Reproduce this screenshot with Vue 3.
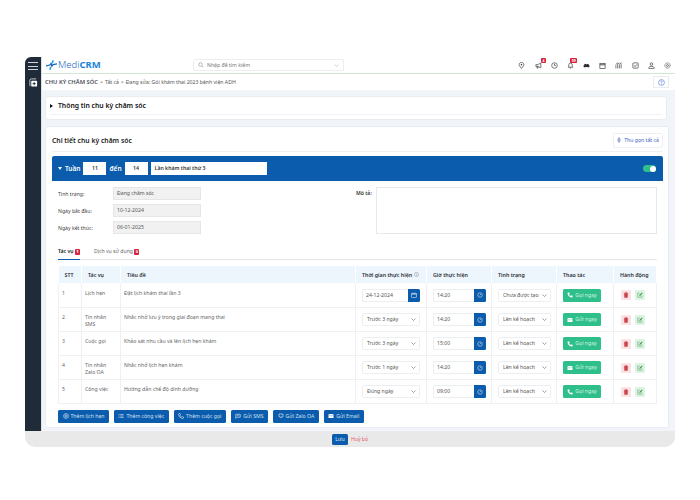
<template>
  <div class="page">
    <div class="frame">
      <div class="body">
        <aside class="sidebar">
          <div class="burger"><span></span><span></span><span></span></div>
          <div class="side-add">
            <svg viewBox="0 0 10 10" width="9" height="9"><path d="M1 9V2.500Q1 1 2.500 1H8" fill="none" stroke="#fff" stroke-width=".8"/><rect x="2.500" y="3" width="6.500" height="6.500" rx="1" fill="#fff"/><path d="M5.750 4.500v3.500M4 6.250h3.500" stroke="#1f2b38" stroke-width="1"/></svg>
          </div>
        </aside>
        <div class="main">
          <header class="topbar">
            <div class="logo">
              <svg viewBox="0 0 14 12" width="11" height="10"><path d="M0 7 5 6 6.500 4 7.500 7.500 9 5.500 14 4.500" fill="none" stroke="#1565c0" stroke-width="1.600"/><path d="M9 0 8 4M6 8 5 12" stroke="#29a3e0" stroke-width="2"/></svg>
              <span class="logo-thin">Medi</span><span class="logo-bold">CRM</span>
            </div>
            <div class="search">
              <svg viewBox="0 0 10 10" width="6" height="6"><circle cx="4.200" cy="4.200" r="3" fill="none" stroke="#8a8f96"/><path d="M6.500 6.500 9 9" stroke="#8a8f96"/></svg>
              <span>Nhập để tìm kiếm</span>
              <svg class="search-caret" viewBox="0 0 10 6" width="5" height="3"><path d="M1 1l4 4 4-4" fill="none" stroke="#9aa0a6"/></svg>
            </div>
            <div class="top-icons">
              <span v-for="ic in topIcons" :key="ic.name" class="top-icon">
                <svg viewBox="0 0 12 12" width="7" height="7" v-html="ic.svg"></svg>
                <b v-if="ic.badge" class="top-badge" :class="{ long: ic.badge.length > 1 }">{{ ic.badge }}</b>
              </span>
            </div>
          </header>

          <div class="crumbs">
            <b>CHU KỲ CHĂM SÓC</b><i>&gt;</i><span>Tất cả</span><i>&gt;</i><span>Đang sửa: Gói khám thai 2023 bệnh viện ADH</span>
            <div class="help">
              <svg viewBox="0 0 12 12" width="7" height="7"><circle cx="6" cy="6" r="5" fill="none" stroke="#4a6fd8"/><path d="M4.500 4.800Q4.800 3.400 6 3.400 7.500 3.500 7.400 4.800 7 6 6 6.500V7.500M6 8.500v.8" fill="none" stroke="#4a6fd8"/></svg>
            </div>
          </div>

          <div class="content">
            <section class="card info-card">
              <div class="info-inner">
                <svg viewBox="0 0 6 8" width="3" height="4"><path d="M0 0l6 4-6 4z" fill="#111"/></svg>
                <h2>Thông tin chu kỳ chăm sóc</h2>
              </div>
            </section>

            <section class="card detail-card">
              <div class="detail-head">
                <h3>Chi tiết chu kỳ chăm sóc</h3>
                <button class="collapse-btn">
                  <svg viewBox="0 0 8 12" width="4" height="6"><path d="M4 0v12M1.500 2 4 4.500 6.500 2M1.500 10 4 7.500 6.500 10M0 6h8" fill="none" stroke="#3f5fc4"/></svg>
                  Thu gọn tất cả
                </button>
              </div>

              <div class="week-bar">
                <svg viewBox="0 0 8 6" width="4" height="3"><path d="M0 0h8L4 6z" fill="#fff"/></svg>
                <span>Tuần</span>
                <div class="week-box">11</div>
                <span>đến</span>
                <div class="week-box">14</div>
                <div class="week-name">Lần khám thai thứ 3</div>
                <div class="switch"><i></i></div>
              </div>

              <div class="form">
                <div class="form-left">
                  <div v-for="f in fields" :key="f.label" class="field">
                    <label>{{ f.label }}</label>
                    <div class="readonly">{{ f.value }}</div>
                  </div>
                </div>
                <div class="form-right">
                  <label>Mô tả:</label>
                  <div class="textarea"></div>
                </div>
              </div>

              <div class="tabs">
                <div class="tab active">Tác vụ <b>1</b></div>
                <div class="tab">Dịch vụ sử dụng <b>0</b></div>
              </div>

              <table class="tasks">
                <colgroup>
                  <col style="width:23px" /><col style="width:39px" /><col style="width:235px" />
                  <col style="width:71px" /><col style="width:65px" /><col style="width:65px" />
                  <col style="width:57px" /><col style="width:43px" />
                </colgroup>
                <thead>
                  <tr>
                    <th>STT</th><th>Tác vụ</th><th>Tiêu đề</th>
                    <th>Thời gian thực hiện <svg viewBox="0 0 12 12" width="5" height="5"><circle cx="6" cy="6" r="5" fill="none" stroke="#777"/><path d="M6 5v4M6 3v1" stroke="#777"/></svg></th>
                    <th>Giờ thực hiện</th><th>Tình trạng</th><th>Thao tác</th><th>Hành động</th>
                  </tr>
                </thead>
                <tbody>
                  <tr v-for="r in rows" :key="r.id">
                    <td>{{ r.id }}</td>
                    <td class="td-type">{{ r.type }}</td>
                    <td>{{ r.title }}</td>
                    <td>
                      <div v-if="r.date" class="date-input">
                        <span>{{ r.date }}</span>
                        <i class="addon"><svg viewBox="0 0 12 12" width="6" height="6"><rect x="1.500" y="2.500" width="9" height="8" fill="none" stroke="#fff"/><path d="M1.500 4.500h9M4 1v2M8 1v2" stroke="#fff"/></svg></i>
                      </div>
                      <div v-else class="select wide">{{ r.when }}<svg viewBox="0 0 10 6" width="5" height="3"><path d="M1 1l4 4 4-4" fill="none" stroke="#444"/></svg></div>
                    </td>
                    <td>
                      <div class="date-input time">
                        <span>{{ r.time }}</span>
                        <i class="addon"><svg viewBox="0 0 12 12" width="6" height="6"><circle cx="6" cy="6" r="4.500" fill="none" stroke="#fff"/><path d="M8 4 5.500 6.500" stroke="#fff"/></svg></i>
                      </div>
                    </td>
                    <td><div class="select">{{ r.status }}<svg viewBox="0 0 10 6" width="5" height="3"><path d="M1 1l4 4 4-4" fill="none" stroke="#444"/></svg></div></td>
                    <td>
                      <button class="send">
                        <svg v-if="r.send === 'Gọi ngay'" viewBox="0 0 12 12" width="6" height="6"><path d="M2 1 4.500 .8 5.500 3.500 4 4.800Q5 7 7.200 8L8.500 6.500 11.200 7.500 11 10Q10.500 11.500 9 11 2.500 9.500 1 3 .8 1.500 2 1z" fill="#fff"/></svg>
                        <svg v-else viewBox="0 0 12 12" width="6" height="6"><rect x="1" y="2" width="10" height="8" rx="1" fill="#fff"/><path d="M1 3l5 3.500L11 3" fill="none" stroke="#2fbf8a" stroke-width=".8"/></svg>
                        {{ r.send }}
                      </button>
                    </td>
                    <td>
                      <div class="row-actions">
                        <i class="act del"><svg viewBox="0 0 12 12" width="6" height="6"><path d="M2.500 3h7l-.6 8H3.100zM1.500 2.500h9M4.500 2.500V1h3v1.500" fill="#c9414a" stroke="#c9414a" stroke-width=".8"/></svg></i>
                        <i class="act edit"><svg viewBox="0 0 12 12" width="6" height="6"><path d="M10 7v3.500H1.500V2H5" fill="none" stroke="#3c9d4f"/><path d="M4.500 8 5 5.500 10 1l1.300 1.300L6.800 7.300z" fill="#3c9d4f"/></svg></i>
                      </div>
                    </td>
                  </tr>
                </tbody>
              </table>

              <div class="add-row">
                <button v-for="b in addButtons" :key="b.label" class="add-btn">
                  <svg viewBox="0 0 12 12" width="6" height="6" v-html="b.svg"></svg>
                  {{ b.label }}
                </button>
              </div>
            </section>
          </div>
        </div>
      </div>

      <footer class="footer">
        <button class="save">Lưu</button>
        <a class="cancel">Huỷ bỏ</a>
      </footer>
    </div>
  </div>
</template>

<script setup>
const line = 'fill="none" stroke="#3d4248" stroke-width="1.200"'

const topIcons = [
  { name: 'pin', svg: `<path d="M6 11 2.500 6.500A4 4 0 1 1 9.500 6.500z" ${line}/><circle cx="6" cy="4.500" r="1.300" fill="#3d4248"/>` },
  { name: 'megaphone', badge: '4', svg: `<path d="M1.500 4.500h3L10 2v8L4.500 7.500h-3z" ${line}/><path d="M3.500 7.500v3h1.500v-3" ${line}/>` },
  { name: 'clock', svg: `<circle cx="6" cy="6" r="4.800" ${line}/><path d="M6 3v3.200h2.500" ${line}/>` },
  { name: 'bell', badge: '99', svg: `<path d="M2 9h8L9 7.500V5A3 3 0 0 0 3 5v2.500zM5 10.500h2" ${line}/>` },
  { name: 'cloud', svg: `<path d="M.5 7.500Q1.500 3 4.500 3L6 4.200 7.500 3Q10.500 3 11.500 7.500L9 9.500 7 8.500H5L3 9.500z" fill="#2c3036"/>` },
  { name: 'calendar', svg: `<rect x="1.500" y="2.500" width="9" height="8.500" ${line}/><path d="M1.500 4.800h9" stroke="#3d4248" stroke-width="1.600"/>` },
  { name: 'chart', svg: `<path d="M1.500 11V6M4.500 11V3M7.500 11V5M10.500 11V2.500M1 4.500 4.500 1.500 7.500 3.500 11 1" ${line}/>` },
  { name: 'check', svg: `<rect x="1.500" y="1.500" width="9" height="9" rx="1" ${line}/><path d="M3.500 6 5.500 8 8.500 4" ${line}/>` },
  { name: 'user', svg: `<circle cx="6" cy="3.500" r="2.300" ${line}/><path d="M1.500 11V9.500Q2 7.500 6 7.500T10.500 9.500V11z" ${line}/>` },
  { name: 'gear', svg: `<circle cx="6" cy="6" r="4.500" ${line} stroke-dasharray="2 .6"/><circle cx="6" cy="6" r="1.600" ${line}/>` }
]

const fields = [
  { label: 'Tình trạng:', value: 'Đang chăm sóc' },
  { label: 'Ngày bắt đầu:', value: '10-12-2024' },
  { label: 'Ngày kết thúc:', value: '06-01-2025' }
]

const rows = [
  { id: 1, type: 'Lịch hẹn', title: 'Đặt lịch khám thai lần 3', date: '24-12-2024', time: '14:20', status: 'Chưa được tạo', send: 'Gọi ngay' },
  { id: 2, type: 'Tin nhắn SMS', title: 'Nhắc nhở lưu ý trong giai đoạn mang thai', when: 'Trước 3 ngày', time: '14:20', status: 'Lên kế hoạch', send: 'Gửi ngay' },
  { id: 3, type: 'Cuộc gọi', title: 'Khảo sát nhu cầu và lên lịch hẹn khám', when: 'Trước 3 ngày', time: '15:00', status: 'Lên kế hoạch', send: 'Gọi ngay' },
  { id: 4, type: 'Tin nhắn Zalo OA', title: 'Nhắc nhở lịch hẹn khám', when: 'Trước 1 ngày', time: '14:20', status: 'Lên kế hoạch', send: 'Gửi ngay' },
  { id: 5, type: 'Công việc', title: 'Hướng dẫn chế độ dinh dưỡng', when: 'Đúng ngày', time: '09:00', status: 'Lên kế hoạch', send: 'Gọi ngay' }
]

const w = 'fill="none" stroke="#fff" stroke-width="1.100"'
const addButtons = [
  { label: 'Thêm lịch hẹn', svg: `<circle cx="6" cy="6" r="4.800" ${w}/><circle cx="6" cy="6" r="2" ${w}/>` },
  { label: 'Thêm công việc', svg: `<path d="M1 3h2M1 6h2M1 9h2M4.500 3H11M4.500 6H11M4.500 9H11" ${w}/>` },
  { label: 'Thêm cuộc gọi', svg: `<path d="M2 1 4 1 5 3.500 4 4.800Q5 7 7.200 8L8.500 7 11 8 11 10Q10 11.500 8 11 2 9 1 3z" ${w}/>` },
  { label: 'Gửi SMS', svg: `<path d="M1.500 2.500h9v6H4L1.500 10.500z" ${w}/><path d="M3.500 5.500h5" ${w}/>` },
  { label: 'Gửi Zalo OA', svg: `<path d="M2 2h8v5.500H7.500L6 10 4.500 7.500H2z" ${w}/>` },
  { label: 'Gửi Email', svg: `<rect x="1" y="2" width="10" height="8" rx="1" fill="#fff"/><path d="M1 3l5 3.500L11 3" fill="none" stroke="#0b5cad" stroke-width=".8"/>` }
]
</script>

<style>
html, body {
  margin: 0;
  background: #fff;
}
</style>

<style scoped>
.page {
  width: 700px;
  height: 500px;
  padding: 57px 25px 53px;
  box-sizing: border-box;
  font-family: "Noto Sans", "Open Sans", sans-serif;
  font-size: 5.150px;
  color: #555;
  overflow: hidden;
}

.frame {
  display: flex;
  flex-direction: column;
  height: 390px;
  border-radius: 6px 0 10px 10px;
  overflow: hidden;
}

.body {
  flex: 1;
  min-height: 0;
  display: flex;
}

.sidebar {
  width: 16px;
  flex: none;
  background: #1f2b38;
  border-right: 1px solid #dfe3e7;
  display: flex;
  flex-direction: column;
  align-items: center;
  padding-top: 5px;
  box-sizing: content-box;
  gap: 8px;
}

.burger {
  display: flex;
  flex-direction: column;
  gap: 2.500px;
  width: 10px;
}

.burger span {
  height: 1px;
  background: #cfd4da;
}

.side-add {
  line-height: 0;
}

.main {
  flex: 1;
  min-width: 0;
  display: flex;
  flex-direction: column;
  background: #f1f5f9;
}

.topbar {
  height: 17px;
  flex: none;
  background: #fff;
  border-bottom: 1px solid #cfe8d5;
  display: flex;
  align-items: center;
  box-sizing: border-box;
  padding: 0 4px 0 4px;
}

.logo {
  width: 147px;
  display: flex;
  align-items: center;
  font-size: 9.500px;
  color: #1565c0;
  line-height: 1;
}

.logo svg {
  margin-right: 1px;
}

.logo-thin {
  font-weight: 300;
}

.logo-bold {
  font-weight: 700;
  color: #1b86d8;
}

.search {
  width: 151px;
  height: 12px;
  border: 1px solid #eceef0;
  border-radius: 2px;
  display: flex;
  align-items: center;
  gap: 3px;
  padding: 0 4px;
  box-sizing: border-box;
  color: #777;
}

.search-caret {
  margin-left: auto;
}

.top-icons {
  margin-left: auto;
  display: flex;
  gap: 9.200px;
}

.top-icon {
  position: relative;
  line-height: 0;
}

.top-badge {
  position: absolute;
  left: 6.500px;
  top: -3.500px;
  width: 5px;
  height: 5px;
  background: #d8203a;
  color: #fff;
  font-size: 3.500px;
  line-height: 5px;
  text-align: center;
  border-radius: 1px;
}

.top-badge.long {
  left: 3.500px;
  width: 7px;
}

.crumbs {
  height: 16px;
  flex: none;
  background: #fff;
  display: flex;
  align-items: center;
  gap: 2px;
  padding: 0 6px 0 3px;
  box-sizing: border-box;
  color: #555;
}

.crumbs b {
  font-weight: 600;
  font-size: 5.800px;
  color: #4a5058;
}

.crumbs i {
  font-style: normal;
  color: #333;
}

.help {
  margin-left: auto;
  width: 16px;
  height: 12px;
  border: 1px solid #e8ebf2;
  box-sizing: border-box;
  display: flex;
  align-items: center;
  justify-content: center;
}

.content {
  flex: 1;
  min-height: 0;
  padding: 6px 6px 3px 3px;
  display: flex;
  flex-direction: column;
  gap: 6px;
}

.card {
  background: #fff;
  border: 1px solid #e8ecf1;
  border-radius: 3px;
  box-sizing: border-box;
}

.info-card {
  height: 24px;
  margin-right: 2px;
  padding: 0 4px 4px;
}

.info-inner {
  height: 100%;
  display: flex;
  align-items: center;
  gap: 5px;
  border-bottom: 1px solid #f0f2f5;
  box-sizing: border-box;
}

.info-card h2 {
  margin: 0;
  font-size: 6.800px;
  font-weight: 600;
  color: #111;
}

.detail-card {
  flex: 1;
  min-height: 0;
  padding: 5px 5px 0 6px;
}

.detail-head {
  display: flex;
  align-items: center;
  justify-content: space-between;
  height: 20px;
  margin-bottom: 4px;
  border-bottom: 1px solid #eef0f3;
  box-sizing: border-box;
  padding-bottom: 3px;
}

.detail-head h3 {
  margin: 0;
  font-size: 6.800px;
  font-weight: 600;
  color: #222;
}

.collapse-btn {
  height: 15px;
  width: 50px;
  border: 1px solid #eef0f5;
  border-radius: 2px;
  background: #fff;
  color: #3f5fc4;
  font: inherit;
  display: flex;
  align-items: center;
  justify-content: center;
  gap: 3px;
  padding: 0;
}

.week-bar {
  height: 25px;
  background: #0b5cad;
  border-radius: 2px 2px 0 0;
  display: flex;
  align-items: center;
  color: #fff;
  font-size: 6.500px;
  font-weight: 600;
  gap: 3px;
  padding: 0 7px 0 6px;
}

.week-box,
.week-name {
  background: #fff;
  color: #333;
  height: 13px;
  line-height: 13px;
  font-size: 5.200px;
  box-sizing: border-box;
}

.week-box {
  width: 23px;
  text-align: center;
}

.week-name {
  width: 116px;
  padding-left: 4px;
  font-weight: 600;
}

.switch {
  margin-left: auto;
  width: 13px;
  height: 7px;
  border-radius: 4px;
  background: #2fbf8a;
  position: relative;
}

.switch i {
  position: absolute;
  right: 0.500px;
  top: 0.500px;
  width: 6px;
  height: 6px;
  border-radius: 50%;
  background: #fff;
}

.form {
  display: flex;
  padding: 6px 6px 0 6px;
}

.form-left {
  width: 298px;
  flex: none;
  display: flex;
  flex-direction: column;
  gap: 4px;
}

.field {
  display: flex;
  align-items: center;
}

.field label {
  width: 55px;
  color: #444;
}

.readonly {
  width: 88px;
  height: 13px;
  background: #f1f1f1;
  border: 1px solid #e6e6e6;
  box-sizing: border-box;
  padding-left: 3px;
  line-height: 11px;
}

.form-right {
  flex: 1;
  display: flex;
  gap: 3px;
}

.form-right label {
  width: 17px;
  flex: none;
  white-space: nowrap;
  font-weight: 600;
  color: #333;
  padding-top: 2px;
}

.textarea {
  flex: 1;
  height: 47px;
  border: 1px solid #e6e8eb;
  box-sizing: border-box;
}

.tabs {
  display: flex;
  gap: 14px;
  height: 16px;
  margin: 10px 6px 6px 6px;
  border-bottom: 1px solid #e4e7ea;
  box-sizing: border-box;
}

.tab {
  height: 16px;
  box-sizing: border-box;
  color: #666;
  line-height: 14px;
}

.tab.active {
  color: #222;
  font-weight: 600;
  border-bottom: 1.500px solid #0b5cad;
}

.tab b {
  display: inline-block;
  min-width: 5px;
  height: 6px;
  line-height: 6px;
  text-align: center;
  background: #d8203a;
  color: #fff;
  font-size: 4px;
  border-radius: 1px;
}

.tasks {
  width: 598px;
  margin-left: 6px;
  table-layout: fixed;
  border-collapse: collapse;
  color: #666;
}

.tasks th {
  height: 17px;
  background: #edf5fd;
  text-align: left;
  padding: 0 6px;
  font-size: 5.300px;
  font-weight: 600;
  color: #2c2f33;
  border-right: 1px solid #fff;
  white-space: nowrap;
}

.tasks td {
  height: 24px;
  padding: 5.500px 6px 0;
  box-sizing: border-box;
  vertical-align: top;
  border-bottom: 1px solid #eef0f3;
  border-right: 1px solid #eef0f3;
  line-height: 7px;
}

.tasks td:nth-child(-n + 3) {
  padding: 6.500px 3px 0;
}

.tasks td:first-child {
  border-left: 1px solid #eef0f3;
}

.date-input,
.select {
  height: 13px;
  display: flex;
  align-items: center;
  box-sizing: border-box;
  border: 1px solid #eceef0;
  border-radius: 1.500px;
  background: #fff;
  color: #555;
}

.date-input {
  width: 58px;
  padding-left: 3px;
  border-right: 0;
  justify-content: space-between;
}

.date-input.time {
  width: 53px;
}

.addon {
  width: 12.500px;
  height: 13px;
  margin: -1px 0;
  background: #0b5cad;
  border-radius: 0 1.500px 1.500px 0;
  display: flex;
  align-items: center;
  justify-content: center;
}

.select {
  width: 53px;
  padding: 0 3px 0 4px;
  justify-content: space-between;
  white-space: nowrap;
}

.select.wide {
  width: 58px;
}

.send {
  width: 38px;
  height: 13px;
  background: #2fbf8a;
  border: 0;
  border-radius: 1.500px;
  color: #d6f3e6;
  font: inherit;
  display: flex;
  align-items: center;
  justify-content: center;
  gap: 2px;
  padding: 0;
}

.row-actions {
  display: flex;
  gap: 4px;
  padding-left: 1px;
}

.act {
  width: 10px;
  height: 10px;
  margin-top: 1.500px;
  border-radius: 1px;
  display: flex;
  align-items: center;
  justify-content: center;
}

.act.del {
  background: #fbe3e5;
}

.act.edit {
  background: #def3e2;
}

.add-row {
  display: flex;
  gap: 5px;
  margin: 6px 0 0 6px;
}

.add-btn {
  height: 13px;
  padding: 0 4.500px;
  border: 0;
  border-radius: 1.500px;
  background: #0b5cad;
  color: #cfe0f2;
  font: inherit;
  display: flex;
  align-items: center;
  gap: 2px;
  white-space: nowrap;
}

.footer {
  height: 16px;
  flex: none;
  background: #e9e9e9;
  display: flex;
  align-items: center;
  justify-content: center;
  gap: 3px;
}

.save {
  width: 16px;
  height: 11px;
  border: 0;
  border-radius: 1.500px;
  background: #0b5cad;
  color: #dfeaf6;
  font: inherit;
  padding: 0;
}

.cancel {
  color: #e35d6a;
}
</style>
